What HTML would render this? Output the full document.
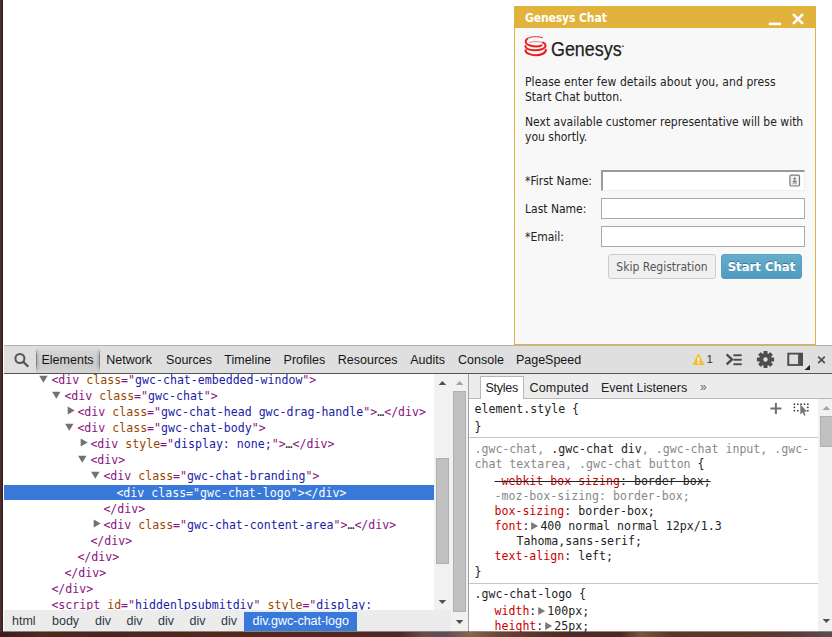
<!DOCTYPE html>
<html><head><meta charset="utf-8"><title>Genesys Chat</title>
<style>
html,body{margin:0;padding:0}
body{width:832px;height:637px;position:relative;overflow:hidden;background:#fff;font-family:'Liberation Sans',sans-serif}
div,span{box-sizing:border-box}
.abs{position:absolute}
#left{left:0;top:0;width:3px;height:637px;background:linear-gradient(90deg,#4c302b 0,#48292a 55%,#2a1211 100%)}
#bottom{left:0;top:632px;width:832px;height:5px;background:linear-gradient(90deg,#3a1c1a 0,#50281f 5%,#4a241e 12%,#54281f 30%,#4c2a24 48%,#6b4c46 51%,#5c4c5a 53.5%,#86664e 56.5%,#6a4434 60%,#4e2c24 67%,#4a2820 74.5%,#7c543f 77%,#5f3529 80.5%,#5a3930 95%,#5c4c58 100%)}
#bottom2{left:3px;top:631px;width:829px;height:1px;background:rgba(45,22,18,.5)}
/* chat */
#chat{left:514px;top:6px;width:302px;height:339px;border:1px solid #e2b33c;background:#f8f8f8;font-family:'DejaVu Sans Condensed','Liberation Sans',sans-serif;font-size:12px;color:#222}
#chead{left:0;top:0;width:300px;height:21px;background:#e2b33c}
#ctitle{left:10px;top:4px;color:#fff;font-weight:bold;font-size:12px;letter-spacing:-.1px;line-height:15px;white-space:nowrap}
.p{left:10px;white-space:nowrap;line-height:15px;font-size:12px}
.lbl{left:10px;white-space:nowrap;line-height:15px;font-size:12px}
.inp{left:86px;width:204px;height:21px;background:#fff;border:1px solid #a9a9a9}
.btn{height:25px;border-radius:3px;line-height:23px;text-align:center;white-space:nowrap;font-size:12px}
/* devtools */
#tb{left:4px;top:345px;width:828px;height:29px;background:#dfdfdf;border-top:1px solid #b2b2b2;border-bottom:1px solid #555}
.tab{top:353px;font-size:12.5px;line-height:14px;color:#151515;white-space:nowrap}
#eltab{left:36px;top:346px;width:64px;height:27px;background:linear-gradient(180deg,rgba(0,0,0,0) 0,rgba(0,0,0,.06) 30%,rgba(0,0,0,.09) 70%,rgba(0,0,0,.05) 100%)}
#eltab:before,#eltab:after{content:"";position:absolute;top:2px;height:24px;width:4px}
#eltab:before{left:0;background:linear-gradient(90deg,rgba(0,0,0,.38) 0,rgba(0,0,0,.38) 1px,rgba(0,0,0,.14) 1px,rgba(0,0,0,0) 4px);-webkit-mask-image:linear-gradient(180deg,transparent,#000 30%,#000 70%,transparent);mask-image:linear-gradient(180deg,transparent,#000 30%,#000 70%,transparent)}
#eltab:after{right:0;background:linear-gradient(270deg,rgba(0,0,0,.38) 0,rgba(0,0,0,.38) 1px,rgba(0,0,0,.14) 1px,rgba(0,0,0,0) 4px);-webkit-mask-image:linear-gradient(180deg,transparent,#000 30%,#000 70%,transparent);mask-image:linear-gradient(180deg,transparent,#000 30%,#000 70%,transparent)}
#dom{left:4px;top:374px;width:430px;height:236px;background:#fff;overflow:hidden}
.row{left:0;height:16px;line-height:16px;font-family:'DejaVu Sans Mono','Liberation Mono',monospace;font-size:11.58px;white-space:pre;color:#881280}
.row i{font-style:normal}
.t{color:#881280} .n{color:#994500} .v{color:#1a1aa6} .k{color:#222}
.sel{left:0;top:111px;width:430px;height:15px;background:#3879d9}
.selrow,.selrow i{color:#fff!important}
.ad{width:0;height:0;border-left:4.2px solid transparent;border-right:4.2px solid transparent;border-top:6px solid #6e6e6e}
.ar{width:0;height:0;border-top:3.9px solid transparent;border-bottom:3.9px solid transparent;border-left:5.6px solid #6e6e6e}
#sb1{left:434px;top:374px;width:17px;height:236px;background:#f1f1f1}
#sb2{left:451px;top:374px;width:17px;height:258px;background:#f1f1f1}
.thumb{background:#c1c1c1;border:1px solid #b0b0b0}
#split{left:468px;top:374px;width:1px;height:258px;background:#a3a3a3}
#crumbs{left:4px;top:610px;width:447px;height:22px;background:#ececec}
.cr{top:614px;font-size:12.5px;line-height:14px;color:#303942;white-space:nowrap}
#side{left:469px;top:374px;width:363px;height:258px;background:#fff;overflow:hidden}
#stabs{left:0;top:0;width:363px;height:25px;background:#ececec;border-bottom:1px solid #b8b8b8}
#stab1{left:11px;top:2px;width:44px;height:23px;background:#fff;border:1px solid #b8b8b8;border-bottom:none}
.st{top:7px;font-size:12.5px;line-height:14px;color:#222;white-space:nowrap}
.sl{height:15px;line-height:15px;font-family:'DejaVu Sans Mono','Liberation Mono',monospace;font-size:11.58px;white-space:pre;color:#222}
.g{color:#888} .r{color:#c80000} .k{color:#222}
.sep{left:0;width:349px;height:1px;background:#c4c4c4}
#sb3{left:349px;top:25px;width:14px;height:233px;background:#f1f1f1}
</style></head>
<body>
<div id="left" class="abs"></div>
<div id="bottom" class="abs"></div>

<div id="chat" class="abs">
  <div id="chead" class="abs"></div>
  <div id="ctitle" class="abs">Genesys Chat</div>
  <!--ICONS_CHAT-->
  <!--LOGO-->
  <div class="abs p" style="top:68px;letter-spacing:.09px">Please enter few details about you, and press</div>
  <div class="abs p" style="top:83px">Start Chat button.</div>
  <div class="abs p" style="top:108px">Next available customer representative will be with</div>
  <div class="abs p" style="top:123px">you shortly.</div>
  <div class="abs lbl" style="top:167px">*First Name:</div>
  <div class="abs lbl" style="top:195px">Last Name:</div>
  <div class="abs lbl" style="top:223px">*Email:</div>
  <div class="abs inp" style="top:163px;border:none;border-top:2px solid #9a9a9a;border-left:2px solid #9a9a9a;border-right:1px solid #eee;border-bottom:1px solid #eee"></div>
  <div class="abs inp" style="top:191px"></div>
  <div class="abs inp" style="top:219px"></div>
  <div class="abs btn" style="left:93px;top:247px;width:108px;line-height:24px;border:1px solid #ccc;background:#f0f0f0;color:#555">Skip Registration</div>
  <div class="abs btn" style="left:206px;top:247px;width:81px;border:1px solid #5a9fbd;background:linear-gradient(180deg,#66adcb,#4e9cc0);color:#fff;font-weight:bold;font-size:13px;text-shadow:0 -1px 0 rgba(0,0,0,.3)">Start Chat</div>
</div>

<div id="tb" class="abs"></div>
<div id="eltab" class="abs"></div>
<div class="abs tab" style="left:41.5px">Elements</div><div class="abs tab" style="left:106.2px">Network</div><div class="abs tab" style="left:166.1px">Sources</div><div class="abs tab" style="left:224.3px">Timeline</div><div class="abs tab" style="left:283.6px">Profiles</div><div class="abs tab" style="left:337.8px">Resources</div><div class="abs tab" style="left:410.2px">Audits</div><div class="abs tab" style="left:458.0px">Console</div><div class="abs tab" style="left:515.9px">PageSpeed</div>


<div id="dom" class="abs">
<div class="abs row" style="left:47.4px;top:-2px">&lt;div <i class="n">class</i>="<i class="v">gwc-chat-embedded-window</i>"&gt;</div><div class="abs row" style="left:60.4px;top:14px">&lt;div <i class="n">class</i>="<i class="v">gwc-chat</i>"&gt;</div><div class="abs row" style="left:73.4px;top:30px">&lt;div <i class="n">class</i>="<i class="v">gwc-chat-head gwc-drag-handle</i>"&gt;<i class="k">…</i>&lt;/div&gt;</div><div class="abs row" style="left:73.4px;top:46px">&lt;div <i class="n">class</i>="<i class="v">gwc-chat-body</i>"&gt;</div><div class="abs row" style="left:86.4px;top:62px">&lt;div <i class="n">style</i>="<i class="v">display: none;</i>"&gt;<i class="k">…</i>&lt;/div&gt;</div><div class="abs row" style="left:86.4px;top:78px">&lt;div&gt;</div><div class="abs row" style="left:99.4px;top:94px">&lt;div <i class="n">class</i>="<i class="v">gwc-chat-branding</i>"&gt;</div><div class="abs sel"></div><div class="abs row selrow" style="left:112.4px;top:111px">&lt;div <i class="n">class</i>="<i class="v">gwc-chat-logo</i>"&gt;&lt;/div&gt;</div><div class="abs row" style="left:99.4px;top:127px">&lt;/div&gt;</div><div class="abs row" style="left:99.4px;top:143px">&lt;div <i class="n">class</i>="<i class="v">gwc-chat-content-area</i>"&gt;<i class="k">…</i>&lt;/div&gt;</div><div class="abs row" style="left:86.4px;top:159px">&lt;/div&gt;</div><div class="abs row" style="left:73.4px;top:175px">&lt;/div&gt;</div><div class="abs row" style="left:60.4px;top:191px">&lt;/div&gt;</div><div class="abs row" style="left:47.4px;top:207px">&lt;/div&gt;</div><div class="abs row" style="left:47.4px;top:223px">&lt;script <i class="n">id</i>="<i class="v">hiddenlpsubmitdiv</i>" <i class="n">style</i>="<i class="v">display:</i></div>
</div>
<div id="sb1" class="abs"><div class="abs thumb" style="left:2px;top:84px;width:13px;height:106px"></div></div>
<div id="crumbs" class="abs"></div>
<div class="abs cr" style="left:12px">html</div><div class="abs cr" style="left:52px">body</div><div class="abs cr" style="left:95px">div</div><div class="abs cr" style="left:126.5px">div</div><div class="abs cr" style="left:158px">div</div><div class="abs cr" style="left:189.5px">div</div><div class="abs cr" style="left:221px">div</div>
<div class="abs" style="left:244px;top:612px;width:113px;height:19px;background:#3879d9"></div>
<div class="abs cr" style="left:252.5px;color:#fff">div.gwc-chat-logo</div>
<div id="sb2" class="abs"><div class="abs thumb" style="left:2px;top:17px;width:13px;height:221px"></div></div>
<div id="split" class="abs"></div>

<div id="side" class="abs">
  <div id="stabs" class="abs"></div>
  <div id="stab1" class="abs"></div>
  <div class="abs st" style="left:16.5px;letter-spacing:-.25px">Styles</div>
  <div class="abs st" style="left:60.5px;letter-spacing:.18px">Computed</div>
  <div class="abs st" style="left:132px">Event Listeners</div>
  <div class="abs st" style="left:231px;top:6px;color:#666;font-size:12px">»</div>
  <div class="abs sl" style="left:5.5px;top:27.5px">element.style {</div><div class="abs sl" style="left:5.5px;top:45.5px">}</div><div class="abs sep" style="top:63px"></div><div class="abs sl" style="left:5.5px;top:67.5px"><span class="g">.gwc-chat, </span>.gwc-chat div<span class="g">, .gwc-chat input, .gwc-</span></div><div class="abs sl" style="left:5.5px;top:82.5px"><span class="g">chat textarea, .gwc-chat button</span> {</div><div class="abs sl" style="left:25.5px;top:99.5px"><span style="text-decoration:line-through;text-decoration-color:#222"><span class="r">-webkit-box-sizing</span>: border-box;</span></div><div class="abs sl" style="left:25.5px;top:114.5px"><span class="g">-moz-box-sizing: border-box;</span></div><div class="abs sl" style="left:25.5px;top:129.5px"><span class="r">box-sizing</span>: border-box;</div><div class="abs sl" style="left:25.5px;top:144.5px"><span class="r">font</span>:<span style="display:inline-block;width:11px"></span>400 normal normal 12px/1.3</div><div class="abs sl" style="left:47.5px;top:159.5px">Tahoma,sans-serif;</div><div class="abs sl" style="left:25.5px;top:174.5px"><span class="r">text-align</span>: left;</div><div class="abs sl" style="left:5.5px;top:191px">}</div><div class="abs sep" style="top:209px"></div><div class="abs sl" style="left:5.5px;top:212.5px">.gwc-chat-logo {</div><div class="abs sl" style="left:25.5px;top:229.5px"><span class="r">width</span>:<span style="display:inline-block;width:11px"></span>100px;</div><div class="abs sl" style="left:25.5px;top:244.5px"><span class="r">height</span>:<span style="display:inline-block;width:11px"></span>25px;</div>
  <div id="sb3" class="abs"><div class="abs thumb" style="left:2px;top:17px;width:12px;height:31px;border-right:none"></div></div>
</div>
<svg class="abs" style="left:0;top:0;pointer-events:none" width="832" height="637" viewBox="0 0 832 637"><g fill="#727272"><path d="M39.2 375.8H47.6L43.4 382.8Z"/><path d="M52.1 391.8H60.5L56.3 398.8Z"/><path d="M67.7 406.4V414.6L74.7 410.5Z"/><path d="M65.1 423.8H73.5L69.3 430.8Z"/><path d="M80.7 438.4V446.6L87.7 442.5Z"/><path d="M78.1 455.8H86.5L82.3 462.8Z"/><path d="M91.1 471.8H99.5L95.3 478.8Z"/><path d="M93.7 519.4V527.6L100.7 523.5Z"/></g><circle cx="19.9" cy="358.5" r="4.5" fill="none" stroke="#555" stroke-width="2"/><path d="M23.4 362L27.6 366" stroke="#555" stroke-width="2.4" stroke-linecap="round"/><path d="M698.5 354.6L703.3 364.3H693.7Z" fill="#f2c037" stroke="#f2c037" stroke-width="1.6" stroke-linejoin="round"/><rect x="697.7" y="357.4" width="1.7" height="3.9" fill="#fff"/><rect x="697.7" y="362.2" width="1.7" height="1.5" fill="#fff"/><text x="706.6" y="363" font-family="Liberation Sans,sans-serif" font-size="11.5" fill="#333">1</text><path d="M726.6 354.4L732 359.4L726.6 364.4" fill="none" stroke="#4a4a4a" stroke-width="2.3"/><rect x="733.4" y="354.3" width="8.3" height="1.9" fill="#4a4a4a"/><rect x="733.4" y="358.8" width="8.3" height="1.9" fill="#4a4a4a"/><rect x="733.4" y="363.3" width="8.3" height="1.9" fill="#4a4a4a"/><circle cx="765.5" cy="359.5" r="6.3" fill="#4d4d4d"/><rect x="763.5" y="350.9" width="4.0" height="3.8" rx="0.6" fill="#4d4d4d" transform="rotate(0.0 765.5 359.5)"/><rect x="763.5" y="350.9" width="4.0" height="3.8" rx="0.6" fill="#4d4d4d" transform="rotate(45.0 765.5 359.5)"/><rect x="763.5" y="350.9" width="4.0" height="3.8" rx="0.6" fill="#4d4d4d" transform="rotate(90.0 765.5 359.5)"/><rect x="763.5" y="350.9" width="4.0" height="3.8" rx="0.6" fill="#4d4d4d" transform="rotate(135.0 765.5 359.5)"/><rect x="763.5" y="350.9" width="4.0" height="3.8" rx="0.6" fill="#4d4d4d" transform="rotate(180.0 765.5 359.5)"/><rect x="763.5" y="350.9" width="4.0" height="3.8" rx="0.6" fill="#4d4d4d" transform="rotate(225.0 765.5 359.5)"/><rect x="763.5" y="350.9" width="4.0" height="3.8" rx="0.6" fill="#4d4d4d" transform="rotate(270.0 765.5 359.5)"/><rect x="763.5" y="350.9" width="4.0" height="3.8" rx="0.6" fill="#4d4d4d" transform="rotate(315.0 765.5 359.5)"/><circle cx="765.5" cy="359.5" r="2.2" fill="#dfdfdf"/><rect x="787.3" y="352.7" width="15.7" height="13.2" fill="#4d4d4d"/><rect x="789.8" y="355" width="7.9" height="8.7" fill="#dddddd" stroke="#eaeaea" stroke-width="0.8"/><path d="M810 364.7V370H804.6Z" fill="#222"/><path d="M818.2 356.6L824.8 363.2M824.8 356.6L818.2 363.2" stroke="#505050" stroke-width="1.7"/><path d="M770.4 408.5H781.4M775.9 403.1V413.9" stroke="#6e6e6e" stroke-width="2"/><rect x="793.65" y="403.45" width="1.5" height="1.5" fill="#333"/><rect x="797.05" y="403.45" width="1.5" height="1.5" fill="#333"/><rect x="800.35" y="403.45" width="1.5" height="1.5" fill="#333"/><rect x="803.75" y="403.45" width="1.5" height="1.5" fill="#333"/><rect x="807.10" y="403.45" width="1.5" height="1.5" fill="#333"/><rect x="793.65" y="406.65" width="1.5" height="1.5" fill="#333"/><rect x="807.10" y="406.65" width="1.5" height="1.5" fill="#333"/><rect x="793.65" y="409.95" width="1.5" height="1.5" fill="#333"/><rect x="797.05" y="409.95" width="1.5" height="1.5" fill="#333"/><rect x="807.10" y="409.95" width="1.5" height="1.5" fill="#333"/><path d="M800.3 404.3V414.6L802.7 412.6L804.2 415.8L805.7 415.1L804.3 412L807 411.5Z" fill="#777"/><rect x="768.8" y="22.6" width="12.2" height="2.6" fill="#fff"/><path d="M793.8 14.9L802.2 23.1M802.2 14.9L793.8 23.1" stroke="#fff" stroke-width="2.7" stroke-linecap="round"/><rect x="789.9" y="175.2" width="9.6" height="10.8" rx="1.2" fill="#f0f0f0" stroke="#787878" stroke-width="1.2"/><circle cx="794.7" cy="178.6" r="1.2" fill="#777"/><path d="M792.6 182.4Q792.6 180.2 794.7 180.2Q796.8 180.2 796.8 182.4Z" fill="#777"/><rect x="792.4" y="183.2" width="4.6" height="1" fill="#aaa"/><g fill="none" stroke="#e6221e" stroke-linecap="round"><path d="M542.4 37.7C538 36.1 530.5 36.2 527.3 38.7" stroke-width="1"/><path d="M527.3 38.7C524.2 41.2 525.6 44.3 530 45.5C534 46.6 539.5 46.4 541.6 45.3" stroke-width="1.9"/><path d="M529.6 42.3C533 41.3 540 41.4 543 42.6" stroke-width="0.9" stroke-opacity=".65"/><path d="M543 42.6C546.6 44.2 546.4 47.4 542.5 49C538 50.8 530.5 50.6 527.4 48.9C525.9 48 525.4 47 525.4 46" stroke-width="2"/><path d="M525.5 50.2C525.6 53.4 531 55.2 536 55.2C541 55.2 545.9 53.1 545.9 49.8" stroke-width="2.1"/></g><text x="551" y="55.9" font-family="Liberation Sans,sans-serif" font-size="20" fill="#231f20" stroke="#231f20" stroke-width="0.25" textLength="70.6" lengthAdjust="spacingAndGlyphs">Genesys</text><rect x="622.2" y="45.6" width="1.4" height="1.4" fill="#231f20"/><path d="M438.59999999999997 385H446.2L442.4 381Z" fill="#505050"/><path d="M438.59999999999997 600H446.2L442.4 604Z" fill="#505050"/><path d="M455.8 385H463.40000000000003L459.6 381Z" fill="#a3a3a3"/><path d="M455.8 620H463.40000000000003L459.6 624Z" fill="#505050"/><path d="M822.6 410H830.1999999999999L826.4 406Z" fill="#a3a3a3"/><path d="M822.6 619H830.1999999999999L826.4 623Z" fill="#505050"/><path d="M531.1 521.9V530.1L538.1 526Z" fill="#7a7a7a"/><path d="M538.2 606.9V615.1L545.2 611Z" fill="#7a7a7a"/><path d="M545.2 621.9V630.1L552.2 626Z" fill="#7a7a7a"/></svg>
<div id="bottom2" class="abs"></div>
</body></html>
